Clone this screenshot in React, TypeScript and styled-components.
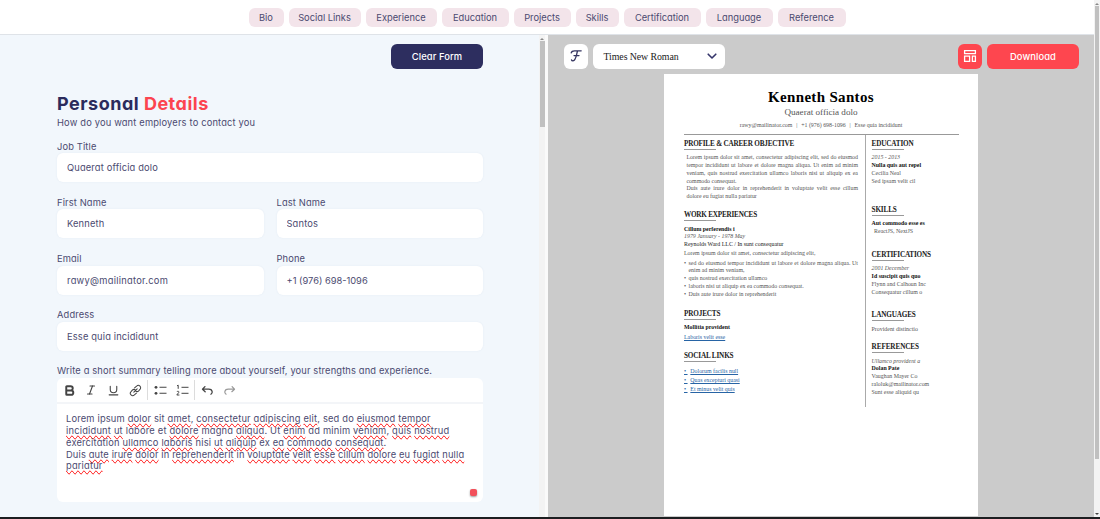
import React from "react";
import styled, { createGlobalStyle, css } from "styled-components";
import { Bold, Italic, Underline } from "lucide-react";

const GlobalStyle = createGlobalStyle`
  *, *::before, *::after { box-sizing: border-box; }
  body {
    margin: 0;
    overflow: hidden;
    background: #fff;
    font-family: Inter, "Open Sans", sans-serif;
    font-feature-settings: "cv11";
    color: #4b4a70;
  }
`;

const Screen = styled.div`
  width: 1100px;
  height: 519px;
  display: flex;
  border-bottom: 2px solid #1c1e20;
`;

const Main = styled.div`
  width: 1094px;
  display: flex;
  flex-direction: column;
`;

const NavBar = styled.nav`
  height: 35px;
  flex: none;
  display: flex;
  justify-content: center;
  gap: 5px;
  padding-top: 8px;
  border-bottom: 1px solid #dfe3e8;
`;

const Pill = styled.a<{ $w: number }>`
  width: ${(p) => p.$w}px;
  height: 18.5px;
  display: flex;
  align-items: center;
  justify-content: center;
  border-radius: 6px;
  background: #f3e4ea;
  font-size: 9.3px;
  white-space: nowrap;
`;

const Panels = styled.div`
  flex: 1;
  min-height: 0;
  display: flex;
`;

const FormPanel = styled.section`
  width: 539px;
  padding: 9px 56px 0 57px;
  background: #f2f7fc;
  display: flex;
  flex-direction: column;
`;

const ScrollTrack = styled.div<{ $w: number; $border?: number }>`
  width: ${(p) => p.$w}px;
  flex: none;
  display: flex;
  flex-direction: column;
  align-items: center;
  background: #f3f3f3;
  border-right: ${(p) => p.$border || 0}px solid #fafafa;
`;

const ScrollArrow = styled.i<{ $down?: boolean }>`
  width: 0;
  height: 0;
  border: 2px solid transparent;
  ${(p) =>
    p.$down
      ? css`border-top-color: #444; border-bottom: 0; margin: auto 0 2px;`
      : css`border-bottom-color: #888; border-top: 0; margin: 3px 0 1px;`}
`;

const ScrollThumb = styled.div<{ $h: number; $w: number }>`
  width: ${(p) => p.$w}px;
  height: ${(p) => p.$h}px;
  background: #c0c0c0;
`;

const FormInner = styled.div`
  width: 426px;
  display: flex;
  flex-direction: column;
`;

const Button = styled.button<{ $bg: string }>`
  width: 92px;
  height: 25px;
  padding: 0;
  border: 0;
  border-radius: 6px;
  background: ${(p) => p.$bg};
  color: #fff;
  font: 500 9.4px Inter, sans-serif;
  font-feature-settings: "cv11";
  letter-spacing: 0.08px;
`;

const ClearButton = styled(Button)`
  align-self: flex-end;
`;

const Title = styled.h1`
  margin: 23px 0 0;
  font-size: 18px;
  line-height: 24px;
  font-weight: 700;
  letter-spacing: 0.5px;
  color: #2b2b5c;
  span { color: #fc444f; }
`;

const Subtitle = styled.p`
  margin: 0 0 9.7px;
  font-size: 9.3px;
  line-height: 14px;
  letter-spacing: 0.18px;
`;

const FieldRow = styled.div`
  display: grid;
  grid-auto-flow: column;
  grid-auto-columns: 1fr;
  gap: 13px;
  height: 56.2px;
`;

const Field = styled.label`
  display: flex;
  flex-direction: column;
  font-size: 9.3px;
  line-height: 13px;
  letter-spacing: 0.15px;
`;

const Input = styled.input<{ $ls?: number }>`
  width: 100%;
  height: 29px;
  margin-top: 0.6px;
  padding: 0 10px;
  border: 0;
  border-radius: 6px;
  background: #fff;
  box-shadow: 0 0 2px rgba(90, 120, 160, 0.1);
  color: inherit;
  font: 400 9.3px Inter, sans-serif;
  font-feature-settings: "cv11";
  letter-spacing: ${(p) => p.$ls ?? 0.16}px;
`;

const EditorLabel = styled.div`
  font-size: 9.3px;
  line-height: 13px;
  letter-spacing: 0.15px;
  white-space: nowrap;
`;

const Editor = styled.div`
  height: 124px;
  margin-top: 1px;
  border-radius: 6px;
  background: #fff;
  display: flex;
  flex-direction: column;
`;

const Toolbar = styled.div`
  height: 26px;
  flex: none;
  display: flex;
  align-items: center;
  padding-left: 1px;
  border-bottom: 2px solid #f3f5f8;
`;

const Tool = styled.span<{ $faded?: boolean }>`
  width: 22px;
  display: flex;
  justify-content: center;
  color: ${(p) => (p.$faded ? "#999" : "#444")};
`;

const Divider = styled.span`
  width: 1px;
  height: 20px;
  margin: 0 1px;
  background: #dcdcdc;
`;

const EditorText = styled.div`
  flex: 1;
  padding: 8.4px 0 0 9px;
  font-size: 9.3px;
  line-height: 11.9px;
  white-space: nowrap;
`;

const EditorLine = styled.div<{ $ls?: number }>`
  letter-spacing: ${(p) => p.$ls || 0}px;
`;

const Misspelt = styled.span`
  text-decoration: spelling-error;
  text-decoration-skip-ink: none;
`;

const Grip = styled.i`
  align-self: flex-end;
  width: 7px;
  height: 7px;
  margin: 0 6px 6px 0;
  border-radius: 2px;
  background: #f2505a;
  box-shadow: 0 1px 2px rgba(0, 0, 0, 0.4);
`;

const Preview = styled.section`
  flex: 1;
  background: #cbcbcb;
  display: flex;
  flex-direction: column;
  align-items: center;
`;

const PreviewBar = styled.div`
  align-self: stretch;
  height: 39px;
  flex: none;
  display: flex;
  gap: 5px;
  padding: 9px 15px 0 16px;
`;

const IconButton = styled.span<{ $bg: string }>`
  width: 24px;
  height: 24.5px;
  display: flex;
  align-items: center;
  justify-content: center;
  border-radius: 6px;
  background: ${(p) => p.$bg};
`;

const FontSelect = styled.div`
  width: 132px;
  height: 25px;
  margin-right: auto;
  padding: 0 8px 0 10.5px;
  display: flex;
  align-items: center;
  justify-content: space-between;
  border-radius: 6px;
  background: #fff;
  color: #222;
  font: 9.9px "Liberation Serif", serif;
  letter-spacing: -0.09px;
`;

const Paper = styled.article`
  width: 314px;
  height: 442px;
  padding: 13px 20px 0;
  background: #fff;
  color: #555;
  font: 5.9px/7.85px "Liberation Serif", serif;
  display: flex;
  flex-direction: column;
`;

const Name = styled.h2`
  margin: 0;
  text-align: center;
  color: #000;
  font-size: 15px;
  line-height: 20px;
  letter-spacing: 0.33px;
`;

const Role = styled.div`
  text-align: center;
  font-size: 9.1px;
  line-height: 10px;
`;

const Contact = styled.div`
  display: flex;
  justify-content: center;
  gap: 3.8px;
  margin-top: 4px;
  height: 13px;
  line-height: 8px;
`;

const Columns = styled.div`
  width: 275px;
  height: 273px;
  display: flex;
  border-top: 1px solid #999;
`;

const MainColumn = styled.div`
  width: 182px;
  padding-right: 7px;
  border-right: 1px solid #aaa;
`;

const SideColumn = styled.div`
  flex: 1;
  padding-left: 5.6px;
  white-space: nowrap;
`;

const Heading = styled.h3<{ $top: number; $ls?: number }>`
  margin: ${(p) => p.$top}px 0 4.4px;
  width: fit-content;
  font-size: 7.2px;
  line-height: 9px;
  letter-spacing: ${(p) => p.$ls ?? -0.16}px;
  color: #222;
  white-space: nowrap;
  &::after {
    content: "";
    display: block;
    width: 32px;
    height: 1px;
    background: #999;
  }
`;

const Text = styled.div<{ $bold?: boolean; $italic?: boolean; $top?: number; $left?: number; $justify?: boolean }>`
  margin-top: ${(p) => p.$top || 0}px;
  padding-left: ${(p) => p.$left || 0}px;
  font-weight: ${(p) => (p.$bold ? 700 : 400)};
  font-style: ${(p) => (p.$italic ? "italic" : "normal")};
  color: ${(p) => (p.$bold ? "#111" : "inherit")};
  text-align: ${(p) => (p.$justify ? "justify" : "left")};
`;

const DarkText = styled(Text)`
  color: #222;
`;

const Bullet = styled(Text)`
  display: flex;
  &::before { content: "•"; width: 4.5px; flex: none; }
`;

const Link = styled.a`
  color: #2764a5;
  text-decoration: underline;
`;

const LinkItem = styled.div`
  height: 9.1px;
  line-height: 8.6px;
  color: #2764a5;
  a:first-child { margin-right: 1.3px; }
`;

const navItems: [string, number][] = [
  ["Bio", 35], ["Social Links", 72], ["Experience", 71], ["Education", 67], ["Projects", 57],
  ["Skills", 43], ["Certification", 77], ["Language", 67], ["Reference", 68],
];

// Words between asterisks are flagged by the spell checker.
const summary: [string, number][] = [
  ["Lorem ipsum *dolor* sit *amet*, *consectetur* *adipiscing* *elit*, sed do *eiusmod* *tempor*", 0.185],
  ["*incididunt* *ut* labore et *dolore* magna *aliqua*. Ut *enim* ad minim *veniam*, *quis* *nostrud*", 0.21],
  ["exercitation *ullamco* *laboris* nisi *ut* *aliquip* ex *ea* *commodo* *consequat*.", 0.19],
  ["Duis *aute* *irure* *dolor* in *reprehenderit* in *voluptate* *velit* *esse* *cillum* *dolore* *eu* *fugiat* *nulla*", 0.15],
  ["*pariatur*", 0.19],
];

const Stroke = ({ d, size = 14, w = 1.2 }: { d: string; size?: number; w?: number }) => (
  <svg width={size} height={size} viewBox="0 0 14 14" fill="none" stroke="currentColor" strokeWidth={w} strokeLinecap="round" strokeLinejoin="round">
    <path d={d} />
  </svg>
);

const LabeledInput = ({ label, value, spacing }: { label: string; value: string; spacing?: number }) => (
  <Field>
    {label}
    <Input defaultValue={value} spellCheck={false} $ls={spacing} />
  </Field>
);

export default function App() {
  return (
    <Screen>
      <GlobalStyle />
      <Main>
        <NavBar>
          {navItems.map(([name, w]) => <Pill key={name} $w={w}>{name}</Pill>)}
        </NavBar>
        <Panels>
          <FormPanel>
            <FormInner>
              <ClearButton $bg="#2d2e5f">Clear Form</ClearButton>
              <Title>Personal <span>Details</span></Title>
              <Subtitle>How do you want employers to contact you</Subtitle>
              <FieldRow><LabeledInput label="Job Title" value="Quaerat officia dolo" /></FieldRow>
              <FieldRow>
                <LabeledInput label="First Name" value="Kenneth" />
                <LabeledInput label="Last Name" value="Santos" />
              </FieldRow>
              <FieldRow>
                <LabeledInput label="Email" value="rawy@mailinator.com" spacing={0.28} />
                <LabeledInput label="Phone" value="+1 (976) 698-1096" spacing={0} />
              </FieldRow>
              <FieldRow><LabeledInput label="Address" value="Esse quia incididunt" /></FieldRow>
              <EditorLabel>Write a short summary telling more about yourself, your strengths and experience.</EditorLabel>
              <Editor>
                <Toolbar>
                  <Tool><Bold size={13} strokeWidth={3.6} /></Tool>
                  <Tool><Italic size={12} strokeWidth={2.2} /></Tool>
                  <Tool><Underline size={13} strokeWidth={2} /></Tool>
                  <Tool><Stroke size={13} w={1.1} d="M5.2 8.8 8.8 5.2M6 4.2 8.2 2.2a2.5 2.5 0 0 1 3.6 3.6L10.4 7.4a2.5 2.5 0 0 1-3 .4M8 9.8l-2.2 2a2.5 2.5 0 0 1-3.6-3.6l1.4-1.6a2.5 2.5 0 0 1 3-.4" /></Tool>
                  <Divider />
                  <Tool>
                    <svg width="13" height="13" viewBox="0 0 13 13" fill="currentColor">
                      <circle cx="2" cy="3.3" r="1.4" /><circle cx="2" cy="9.3" r="1.4" />
                      <path d="M5.5 2.8h7v1h-7zM5.5 8.8h7v1h-7z" />
                    </svg>
                  </Tool>
                  <Tool>
                    <svg width="13" height="13" viewBox="0 0 13 13" fill="none" stroke="currentColor" strokeWidth="1">
                      <path d="M5.5 3.3h7M5.5 9.3h7M1 1.8l1.2-.6v3.6M.8 7.9c.6-1 2.5-.8 2 .5L.8 11h2.6" />
                    </svg>
                  </Tool>
                  <Divider />
                  <Tool><Stroke size={13} w={1.4} d="M4.2 2.8 1.6 5.6l2.9 2.7M1.9 5.6h6.6c4 0 4.5 4 2.2 5.4" /></Tool>
                  <Tool $faded><Stroke size={13} w={1.3} d="M9.8 2.8l2.6 2.8-2.9 2.7M12.1 5.6H5.5c-4 0-4.5 4-2.2 5.4" /></Tool>
                </Toolbar>
                <EditorText>
                  {summary.map(([line, ls], i) => (
                    <EditorLine key={i} $ls={ls}>
                      {line.split("*").map((part, j) => (j % 2 ? <Misspelt key={j}>{part}</Misspelt> : part))}
                    </EditorLine>
                  ))}
                </EditorText>
                <Grip />
              </Editor>
            </FormInner>
          </FormPanel>
          <ScrollTrack $w={9} $border={3}>
            <ScrollArrow />
            <ScrollThumb $w={5} $h={86} />
          </ScrollTrack>
          <Preview>
            <PreviewBar>
              <IconButton $bg="#fff">
                <svg width="14" height="14" viewBox="0 0 14 14" fill="none" stroke="#33335f" strokeWidth="1.3" strokeLinecap="round">
                  <path d="M2.2 3.8C2.6 2.2 4 1.8 5.5 1.8H12.2M8.6 1.8C7.4 5 7.2 11.6 4 11.8c-1 0-1.4-.4-1.5-1M5 6.6h5" />
                </svg>
              </IconButton>
              <FontSelect>
                Times New Roman
                <svg width="10" height="7" viewBox="0 0 10 7" fill="none" stroke="#34346a" strokeWidth="1.6" strokeLinecap="round" strokeLinejoin="round">
                  <path d="M1.2 1.2 5 5l3.8-3.8" />
                </svg>
              </FontSelect>
              <IconButton $bg="#fe464f">
                <svg width="14" height="14" viewBox="0 0 14 14" fill="none" stroke="#fff" strokeWidth="1.3">
                  <path d="M1.6 1.6h10.8v3H1.6zM1.6 7.2h5v5.2h-5zM9.4 7.2h3v5.2h-3z" />
                </svg>
              </IconButton>
              <Button $bg="#fe464f">Download</Button>
            </PreviewBar>
            <Paper>
              <Name>Kenneth Santos</Name>
              <Role>Quaerat officia dolo</Role>
              <Contact>
                <span>rawy@mailinator.com</span><span>|</span><span>+1 (976) 698-1096</span><span>|</span><span>Esse quia incididunt</span>
              </Contact>
              <Columns>
                <MainColumn>
                  <Heading $top={4.6} $ls={-0.2}>PROFILE &amp; CAREER OBJECTIVE</Heading>
                  <Text $left={2.5} $justify>
                    Lorem ipsum dolor sit amet, consectetur adipiscing elit, sed do eiusmod tempor incididunt ut labore et dolore magna aliqua. Ut enim ad minim veniam, quis nostrud exercitation ullamco laboris nisi ut aliquip ex ea commodo consequat.
                  </Text>
                  <Text $left={2.5} $justify>Duis aute irure dolor in reprehenderit in voluptate velit esse cillum dolore eu fugiat nulla pariatur</Text>
                  <Heading $top={10.1} $ls={-0.22}>WORK EXPERIENCES</Heading>
                  <Text $bold>Cillum perferendis i</Text>
                  <Text $italic>1979 January - 1978 May</Text>
                  <DarkText>Reynolds Ward LLC / In sunt consequatur</DarkText>
                  <Text $top={1.3}>Lorem ipsum dolor sit amet, consectetur adipiscing elit,</Text>
                  <Bullet $top={1.3} $justify>sed do eiusmod tempor incididunt ut labore et dolore magna aliqua. Ut enim ad minim veniam,</Bullet>
                  <Bullet>quis nostrud exercitation ullamco</Bullet>
                  <Bullet>laboris nisi ut aliquip ex ea commodo consequat.</Bullet>
                  <Bullet>Duis aute irure dolor in reprehenderit</Bullet>
                  <Heading $top={11.1}>PROJECTS</Heading>
                  <Text $bold>Mollitia provident</Text>
                  <Text $top={2.2}><Link>Laboris velit esse</Link></Text>
                  <Heading $top={10.4}>SOCIAL LINKS</Heading>
                  <LinkItem><Link>•&nbsp;</Link> <Link>Dolorum facilis null</Link></LinkItem>
                  <LinkItem><Link>•&nbsp;</Link> <Link>Quas excepturi quasi</Link></LinkItem>
                  <LinkItem><Link>•&nbsp;</Link> <Link>Et minus velit quis</Link></LinkItem>
                </MainColumn>
                <SideColumn>
                  <Heading $top={4.6}>EDUCATION</Heading>
                  <Text $italic>2015 - 2013</Text>
                  <Text $bold>Nulla quis aut repel</Text>
                  <Text>Cecilia Neal</Text>
                  <Text>Sed ipsam velit cil</Text>
                  <Heading $top={20.6}>SKILLS</Heading>
                  <Text $bold>Aut commodo esse es</Text>
                  <Text $left={2.5}>ReactJS, NextJS</Text>
                  <Heading $top={14.9} $ls={-0.2}>CERTIFICATIONS</Heading>
                  <Text $italic>2001 December</Text>
                  <Text $bold>Id suscipit quis quo</Text>
                  <Text>Flynn and Calhoun Inc</Text>
                  <Text>Consequatur cillum o</Text>
                  <Heading $top={14.6}>LANGUAGES</Heading>
                  <Text>Provident distinctio</Text>
                  <Heading $top={9.6} $ls={-0.1}>REFERENCES</Heading>
                  <Text $italic>Ullamco provident a</Text>
                  <Text $bold>Dolan Pate</Text>
                  <Text>Vaughan Mayer Co</Text>
                  <Text>raloluk@mailinator.com</Text>
                  <Text>Sunt esse aliquid qu</Text>
                </SideColumn>
              </Columns>
            </Paper>
          </Preview>
        </Panels>
      </Main>
      <ScrollTrack $w={6}>
        <ScrollArrow />
        <ScrollThumb $w={4} $h={453} />
        <ScrollArrow $down />
      </ScrollTrack>
    </Screen>
  );
}
